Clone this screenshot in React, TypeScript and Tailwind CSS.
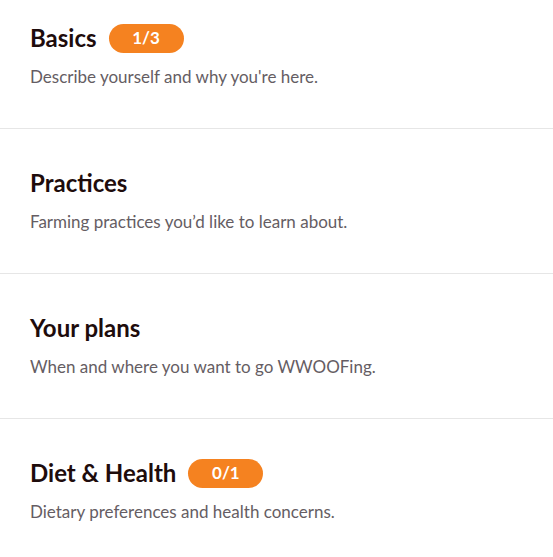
import React from 'react';

type Section = {
  title: string;
  description: string;
  progress?: string;
};

const sections: Section[] = [
  { title: 'Basics', description: "Describe yourself and why you're here.", progress: '1/3' },
  { title: 'Practices', description: 'Farming practices you’d like to learn about.' },
  { title: 'Your plans', description: 'When and where you want to go WWOOFing.' },
  { title: 'Diet & Health', description: 'Dietary preferences and health concerns.', progress: '0/1' },
];

const App: React.FC = () => {
  return (
    <div className="min-h-screen bg-white font-['Lato','Liberation_Sans',sans-serif]">
      {sections.map((s, i) => (
        <div
          key={s.title}
          className={`px-[30px] pb-[39px] ${i === 0 ? 'pt-6' : 'pt-10'} ${i < sections.length - 1 ? 'border-b border-[#e6e6e6]' : ''}`}>
          <div className="flex h-7 items-center">
            <h2 className="text-[24px] font-bold leading-7 text-[#1e0c0c]">{s.title}</h2>
            {s.progress && (
              <span className="ml-3 flex h-[29px] w-[75px] items-center justify-center rounded-full bg-[#f58220] text-[17px] font-bold text-white">
                {s.progress}
              </span>
            )}
          </div>
          <p className="mt-[13px] text-[17px] leading-6 text-[#655d63]">{s.description}</p>
        </div>
      ))}
    </div>
  );
};

export default App;
